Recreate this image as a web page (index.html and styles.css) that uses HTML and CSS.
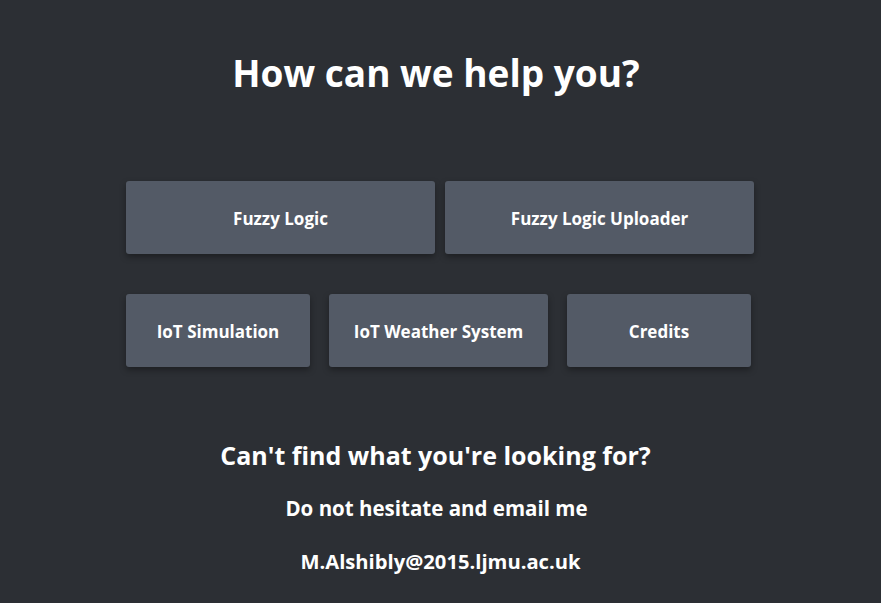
FILE: index.html
```html
<!DOCTYPE html>
<html>
<head>
<meta charset="utf-8">
<link rel="stylesheet" href="styles.css">
</head>
<body>
<main class="page">
  <h1 class="title">How can we help you?</h1>
  <div class="grid">
    <div class="row row-top">
      <a class="tile tile-wide">Fuzzy Logic</a>
      <a class="tile tile-wide">Fuzzy Logic Uploader</a>
    </div>
    <div class="row row-bottom">
      <a class="tile tile-sm">IoT Simulation</a>
      <a class="tile tile-md">IoT Weather System</a>
      <a class="tile tile-sm">Credits</a>
    </div>
  </div>
  <section class="contact">
    <h2 class="contact-title">Can't find what you're looking for?</h2>
    <p class="contact-line contact-lead">Do not hesitate and email me</p>
    <p class="contact-line contact-email">M.Alshibly@2015.ljmu.ac.uk</p>
  </section>
</main>
</body>
</html>
```
FILE: styles.css
```css
html, body {
  margin: 0;
  padding: 0;
  background: #2c2f34;
  height: 100%;
}
body {
  font-family: "Open Sans", "Noto Sans", sans-serif;
  color: #ffffff;
}
.page {
  display: flex;
  flex-direction: column;
  align-items: center;
  padding-top: 47px;
}
.title {
  margin: 0;
  padding-right: 9px;
  font-size: 37px;
  font-weight: 700;
  line-height: 52px;
}
.grid {
  margin-top: 82px;
  display: flex;
  flex-direction: column;
  gap: 40px;
  width: 629px;
}
.row {
  display: flex;
}
.row-top {
  gap: 10px;
}
.row-bottom {
  gap: 19px;
}
.tile {
  height: 73px;
  box-sizing: border-box;
  padding-top: 2px;
  display: flex;
  align-items: center;
  justify-content: center;
  background: #535a66;
  border-radius: 3px;
  box-shadow: 0 3px 6px rgba(0, 0, 0, 0.35);
  font-size: 17px;
  font-weight: 700;
  color: #ffffff;
}
.tile-wide { width: 309px; }
.tile-sm { width: 184px; }
.tile-md { width: 219px; }
.contact {
  margin-top: 71px;
  display: flex;
  flex-direction: column;
  align-items: center;
}
.contact-title {
  margin: 0;
  padding-right: 10px;
  font-size: 25px;
  font-weight: 700;
  line-height: 34px;
}
.contact-line {
  margin: 19px 0 0;
  font-size: 20.5px;
  font-weight: 700;
  line-height: 34px;
}
.contact-lead {
  padding-right: 8px;
}
.contact-email {
  font-size: 20.2px;
}
```
